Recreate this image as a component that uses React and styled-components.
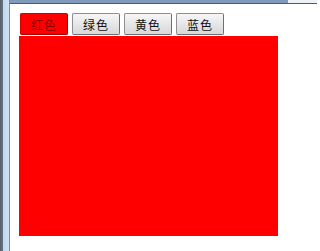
import React from 'react';
import styled, { createGlobalStyle } from 'styled-components';

const GlobalStyle = createGlobalStyle`
  html, body {
    margin: 0;
    padding: 0;
    background: #ffffff;
  }
  body {
    font-family: "Noto Sans CJK SC", "Liberation Sans", sans-serif;
    font-size: 12px;
  }
`;

const tabs = [
  { label: '红色', active: true },
  { label: '绿色' },
  { label: '黄色' },
  { label: '蓝色' },
];

const App = () => {
  return (
    <>
      <GlobalStyle />
      <Screen>
        <FrameEdge />
        <Window>
          <TitleStrip>
            <TitleBar />
          </TitleStrip>
          <Body>
            <TabRow>
              {tabs.map((t) => (
                <Tab key={t.label} $active={t.active}>
                  {t.label}
                </Tab>
              ))}
            </TabRow>
            <Panel />
          </Body>
        </Window>
      </Screen>
    </>
  );
};

const Screen = styled.div`
  display: flex;
  width: 317px;
  height: 251px;
  overflow: hidden;
`;

const FrameEdge = styled.div`
  width: 10px;
  flex-shrink: 0;
  background: linear-gradient(
    to right,
    #56606c 0px,
    #6b7683 3px,
    #c3d9ee 3px,
    #cfe2f3 9px,
    #7d8b98 9px,
    #7d8b98 10px
  );
`;

const Window = styled.div`
  flex: 1;
  display: flex;
  flex-direction: column;
`;

const TitleStrip = styled.div`
  height: 3px;
  border-bottom: 1px solid #505a66;
  background: #eef2f7;
`;

const TitleBar = styled.div`
  width: 278px;
  height: 3px;
  background: #8199bb;
`;

const Body = styled.div`
  padding: 9px 0 0 9px;
  display: flex;
  flex-direction: column;
`;

const TabRow = styled.div`
  display: flex;
  gap: 4px;
  height: 22px;
  padding-left: 1px;
`;

const Tab = styled.div`
  box-sizing: border-box;
  width: 48px;
  height: 22px;
  display: flex;
  align-items: center;
  justify-content: center;
  letter-spacing: 1px;
  border-radius: 2px;
  border: 1px solid ${(p) => (p.$active ? '#d40000' : '#8f8f8f')};
  border-right-color: ${(p) => (p.$active ? '#a00000' : '#707070')};
  border-bottom-color: ${(p) => (p.$active ? '#a00000' : '#707070')};
  color: ${(p) => (p.$active ? '#8a0000' : '#111111')};
  background: ${(p) =>
    p.$active ? '#ff0000' : 'linear-gradient(to bottom, #f7f7f7, #e6e6e6 50%, #d8d8d8)'};
`;

const Panel = styled.div`
  margin-top: 1px;
  width: 259px;
  height: 200px;
  background: #ff0000;
`;

export default App;
